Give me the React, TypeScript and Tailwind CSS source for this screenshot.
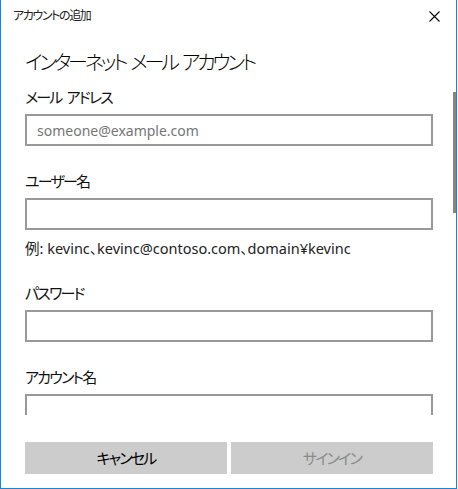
export default function App() {
  const jp = "[font-family:'Noto_Sans','Noto_Sans_CJK_JP',sans-serif] [font-feature-settings:'palt']";

  return (
    <div
      className={`relative w-[457px] h-[489px] bg-white border-x border-b border-[#1883d7] flex flex-col text-[#111] ${jp}`}
    >
      {/* title bar */}
      <div className="h-[32px] flex items-center justify-between pl-[12px] pr-[16px]">
        <span className="text-[12px] leading-[16px] tracking-[-1.4px] text-[#222]">アカウントの追加</span>
        <svg width="11" height="11" viewBox="0 0 11 11" className="text-black">
          <path d="M0.5 0.5 L10.5 10.5 M10.5 0.5 L0.5 10.5" stroke="currentColor" strokeWidth="1.1" fill="none" />
        </svg>
      </div>

      <div className="flex flex-col pl-[24px] pr-[23px]">
        <h1 className="mt-[17px] text-[20px] leading-[28px] font-light tracking-[-3.2px] [word-spacing:3px] text-black">
          インターネット メール アカウント
        </h1>

        {/* scroll area */}
        <div className="mt-[10px] h-[328px] overflow-hidden flex flex-col">
          <Field label="メール アドレス" placeholder="someone@example.com" />
          <div className="h-[25px] shrink-0" />
          <Field label="ユーザー名" />
          <p className="mt-[8px] text-[14.5px] leading-[20px] text-[#222] shrink-0">
            例: kevinc、kevinc@contoso.com、domain¥kevinc
          </p>
          <div className="h-[25px] shrink-0" />
          <Field label="パスワード" />
          <div className="h-[25px] shrink-0" />
          <Field label="アカウント名" />
        </div>

        <div className="mt-[27px] grid grid-cols-2 gap-[4px]">
          <button className="h-[32px] bg-[#cccccc] text-[15px] tracking-[-1.8px] text-black">キャンセル</button>
          <button className="h-[32px] bg-[#cccccc] text-[15px] tracking-[-1.8px] text-[#8a8a8a]">サインイン</button>
        </div>
      </div>

      {/* scrollbar */}
      <div className="absolute left-[452px] top-[92px] w-[3px] h-[121px] bg-[#858585]" />
    </div>
  );
}

function Field({ label, placeholder }: { label: string; placeholder?: string }) {
  return (
    <div className="flex flex-col shrink-0">
      <label className="text-[15px] leading-[20px] tracking-[-1.8px] [word-spacing:3px] text-[#111]">{label}</label>
      <div className="mt-[7px] h-[32px] border-2 border-[#999999] flex items-center px-[10px]">
        {placeholder && <span className="text-[14px] text-[#767676]">{placeholder}</span>}
      </div>
    </div>
  );
}
